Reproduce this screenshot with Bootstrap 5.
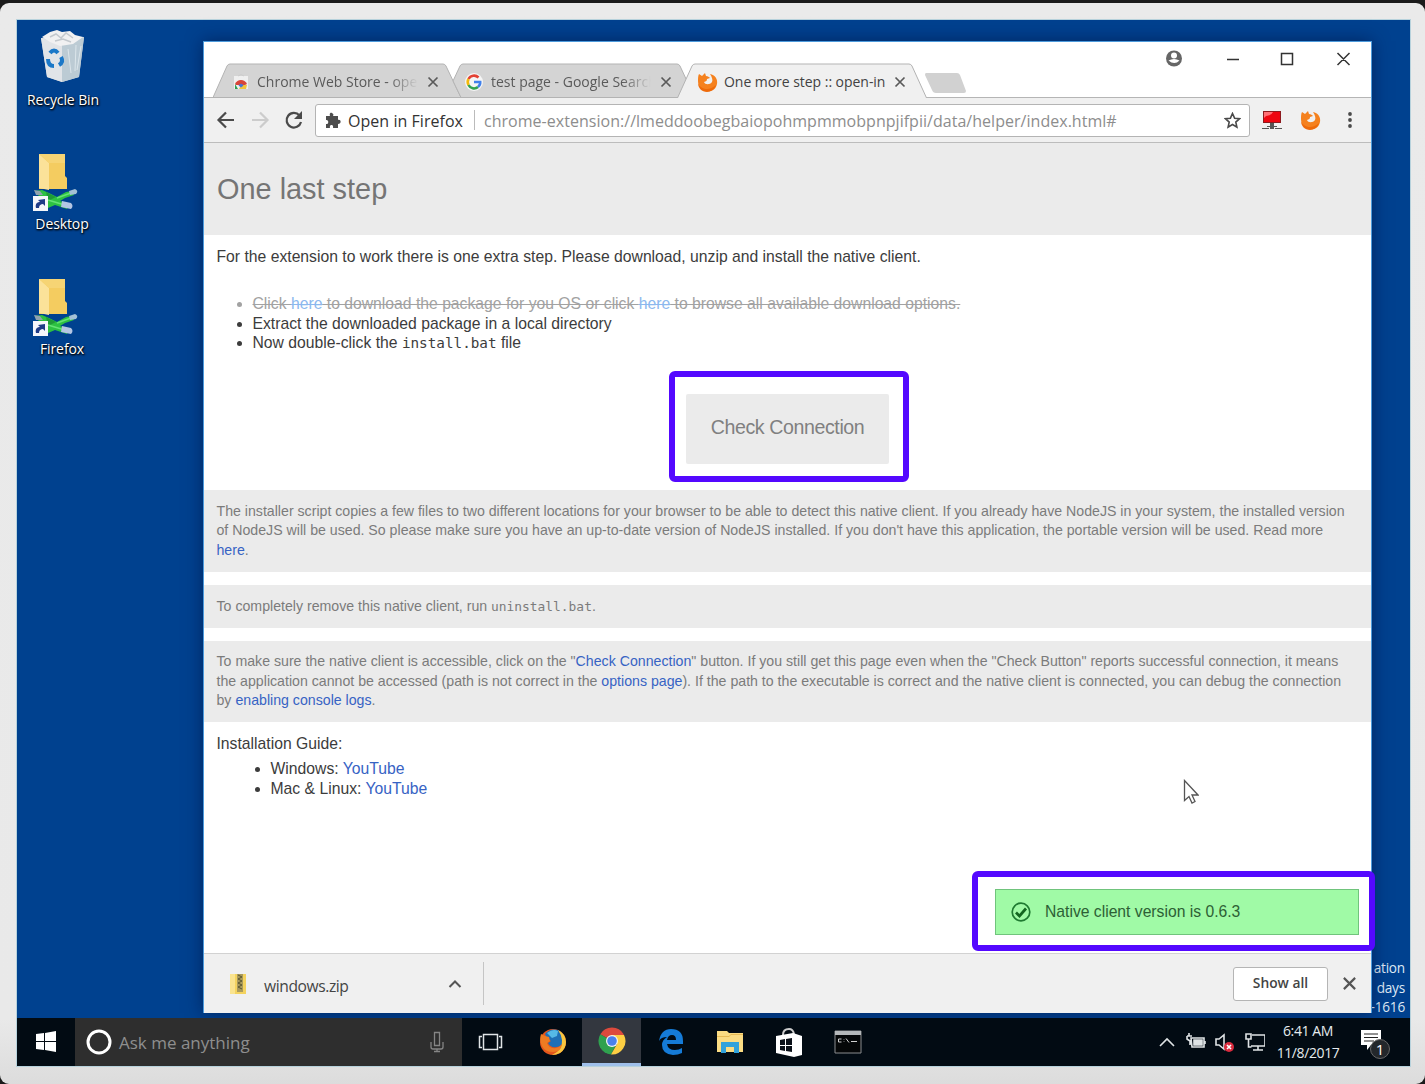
<!DOCTYPE html>
<html lang="en">
<head>
<meta charset="utf-8">
<title>One more step :: open-in</title>
<link href="https://cdn.jsdelivr.net/npm/bootstrap@5.3.0/dist/css/bootstrap.min.css" rel="stylesheet">
<style>
html,body{height:1084px;overflow:hidden}
body{background:#1b1b1b;padding-top:3px;font-family:"Liberation Sans",sans-serif;color:#3c3c3c}
.bezel{height:1081px;width:1425px;background:linear-gradient(#eaeaea,#e9e9e9 94%,#dcdcdc);border-radius:9px;padding:17px 15px 17px 17px}
.desk{width:1393px;height:1046px;background:#00418f;position:relative;outline:1px solid #b7d2dc}
.ui{font-family:"Open Sans","Noto Sans",sans-serif;white-space:nowrap}
svg{display:block;flex:none}
.shortcut{position:absolute;width:92px;text-align:center;color:#fff;font-size:14px;line-height:18px;letter-spacing:-.1px;text-shadow:1px 1px 2px #000,0 1px 2px #000}
.shortcut svg{margin:0 auto}
.wmark{position:absolute;right:5px;top:938px;color:#dfe9f6;font-size:13.6px;line-height:19.6px;text-align:right;letter-spacing:-.2px}
.win{position:absolute;left:186px;top:21px;width:1169px;height:972px;background:#fff;border:1px solid #4d9bdc;box-shadow:0 0 16px rgba(0,10,50,.5)}
.strip{height:56px;border-bottom:1px solid #b5b5b5;position:relative}
.tabs{position:absolute;left:9px;top:21px}
.tabrow{height:36px;padding:4px 0 0 26px;font-size:14px;color:#5a5a5a}
.tabtext{overflow:hidden;line-height:30px;height:30px}
.fade-end{-webkit-mask-image:linear-gradient(90deg,#000 82%,transparent);mask-image:linear-gradient(90deg,#000 82%,transparent)}
.tools{height:45px;background:#f0f0f0;border-bottom:1px solid #bcbcbc;padding-left:12px}
.omni{margin-left:11px;width:935px;height:33px;background:#fff;border:1px solid #b4b4b4;border-radius:3px;padding:0 8px 0 8px}
.omni .site{color:#333;font-size:16px;letter-spacing:.04px;margin-left:7px;width:115px;padding-top:2px}
.omni .url{color:#8d8d8d;font-size:16px;letter-spacing:.03px;border-left:1px solid #bbb;line-height:20px;margin-left:11px;padding-left:9px}
.omni .url span{position:relative;top:1px}
.pg{height:810px;background:#fff;position:relative}
.hero{height:92px;background:#ebebeb;padding-left:13px}
.hero h1{font-size:28.9px;color:#757575;font-weight:400;margin:0}
.body-txt{font-size:15.72px;line-height:19.5px;padding:0 12.5px;white-space:nowrap}
.body-txt ul{margin:0;padding-left:36px}
.note{background:#ebebeb;color:#7b7b7b;font-size:14.16px;line-height:19.5px;padding:11.5px 12.5px;white-space:nowrap}
.pg a{color:#3763c4;text-decoration:none}
.pg code{color:inherit;font-family:"DejaVu Sans Mono",monospace;font-size:.91em;line-height:1}
.gone{color:#a2a2a2;text-decoration:line-through}
.gone a{color:#8cb8ee!important;text-decoration:line-through}
.mark-box{border:6px solid #5408ff;border-radius:6px;background:#fff}
.mark-btn{margin:0 auto;width:240px;height:111px;padding:17px 3px 0 0}
.check{width:203px;height:70px;background:#ebebeb;border:0;border-radius:2px;color:#808080;font-size:19.6px;letter-spacing:-.4px;padding:0 0 2px}
.mark-toast{position:absolute;left:768px;top:728px;width:403px;height:80px;padding:12px 10px 0 17px}
.toast-ok{height:46px;background:#a0faa6;border:1px solid #70c47c;color:#2d6035;font-size:15.7px;padding-left:15px}
.shelf{height:60px;background:#f0f0f0;border-top:1px solid #d2d2d2}
.showall{width:95px;height:34px;background:#fff;border:1px solid #b5b5b5;border-radius:3px;color:#444;font-size:13.8px;font-weight:600}
.taskbar{position:absolute;left:0;bottom:0;width:1393px;height:48px;background:#020b13}
.search{width:387px;background:#2e2e2e;color:#8e8e8e;font-size:17px}
.app{width:59px;height:48px}
.app.on{background:#33373f;border-bottom:3px solid #9fbfea}
.clock{font-size:14px;line-height:22px;color:#e6ebee;text-align:center;letter-spacing:-.4px;width:70px}
.pointer{position:absolute;left:979px;top:636px}
</style>
</head>
<body>
<svg width="0" height="0" class="position-absolute">
<defs>
<symbol id="fox" viewBox="0 0 20 20"><path d="M1 2l3 2 3-3 1 3c2 0 3 1 4 2l-3 1c0 2-1 2-3 3 1 3 6 3 8 0 1-2 0-5-2-8 5 1 8 5 7 10-1 5-5 8-10 7C3 18 0 14 0 9c0-3 0-5 1-7z" fill="#f5811e"/><path d="M0 11c2 6 11 9 18 2-1 4-5 7-9 7-5 0-9-4-9-9z" fill="#ee6a0a"/></symbol>
<symbol id="x" viewBox="0 0 12 12"><path d="M1.500 1.500l9 9m0-9l-9 9" fill="none" stroke="currentColor" stroke-width="1.700"/></symbol>
<symbol id="netfolder" viewBox="0 0 46 58"><path d="M6 1h26v22l2 2v11H6z" fill="#f4cc60"/><path d="M6 1l10 9v27L6 35z" fill="#fbe299"/><path d="M16 10h16V1H6z" fill="#f6d474"/><path d="M2 38l7-1 7 3 8 4 9-5 6-1 2 4-9 3-5 3 9 3-2 5-12-4-7 3z" fill="#2dc142"/><path d="M13 39l10 5-8 4z" fill="#1f9a37"/><path d="M15 47l20 6M24 45l14-5" stroke="#65e374" stroke-width="1.500"/><path d="M36 38l6-2q4 2 1 5l-6 1z" fill="#a3c0d6"/><path d="M29 48l9 2q3 3 0 6l-10-2z" fill="#b4c6e4"/><path d="M1 37l6 1 3 4H3z" fill="#8fa3ad"/><path d="M0 43h15v15H0z" fill="#f4f6fa"/><path d="M3 55c-1-4 1-6 4-6l-2-2 7-1v7l-2-2c-2 0-4 1-4 4z" fill="#1e3b87"/></symbol>
</defs></svg>

<div class="bezel"><div class="desk">
  <div class="shortcut ui" style="left:0;top:9px">
    <svg width="50" height="54" viewBox="0 0 50 54"><path d="M3 9l43-1-5 40-17 5-15-5z" fill="#d5dbe0"/><path d="M24 16l22-8-5 40-17 5z" fill="#bccbd4"/><path d="M3 9l21 7v37L9 48z" fill="#e1e4e8"/><path d="M4 8l8-5 7-2 5 2 8-1 5 4 8 2-10 7-13 2-10-4z" fill="#f1f1f2"/><path d="M12 8l6-3 5 4 5-5 7 5M17 12l8-2 8 3" fill="none" stroke="#c3c8cd" stroke-width="1.500"/><path d="M30 20l3 24m5-28l-1 26m6-25l-4 24" stroke="#dce6eb"/><g fill="none" stroke="#1b78c8" stroke-width="4"><path d="M12 24q4-5 8 0"/><path d="M23 28q3 5-2 8"/><path d="M16 37q-6 0-6-7"/></g></svg>
    <div style="margin-top:8px">Recycle Bin</div>
  </div>
  <div class="shortcut ui" style="left:-1px;top:133px"><svg width="46" height="58" style="margin-left:17px"><use href="#netfolder"/></svg><div style="margin-top:4px">Desktop</div></div>
  <div class="shortcut ui" style="left:-1px;top:258px"><svg width="46" height="58" style="margin-left:17px"><use href="#netfolder"/></svg><div style="margin-top:4px">Firefox</div></div>
  <div class="wmark ui">ation<br>days<br>-1616</div>

  <main class="win">
    <div class="strip">
      <svg class="tabs" width="760" height="35" viewBox="0 0 760 35"><path d="M0 34.500L14 3q1-2 3-2H230q2 0 3 2L248 34.500z" fill="#d4d4d4" stroke="#b3b3b3"/><path d="M248 34.500L240 18 247 3q1-2 3-2H464q2 0 3 2L474 18 466 34.500z" fill="#d4d4d4" stroke="#b3b3b3"/><path d="M464 36L479 3q1-2 3-2H696q2 0 3 2L714 36z" fill="#f0f0f0" stroke="#b3b3b3"/><path d="M713 10h31q2 0 3 2l6 16q0 2-2 2h-28q-3 0-4-3l-7-15q0-2 1-2z" fill="#d1d1d1"/></svg>
      <div class="position-absolute d-flex align-items-center ui tabrow" style="left:2px;top:20px">
        <svg width="18" height="18" viewBox="0 0 18 18"><path d="M2 3h14v13H2z" fill="#efefef"/><path d="M6 3q3-3 6 0" fill="none" stroke="#ccc"/><path d="M3 11q2-4 6-4t6 4l-2 1H4z" fill="#d8463a"/><path d="M3 11l3 5H3z" fill="#2e9e54"/><path d="M9 12h6l-1 4H7z" fill="#f2c43c"/><path d="M6.500 12.500q2.500-3.500 5 0l-2.500 2z" fill="#4477d8"/></svg>
        <div class="tabtext fade-end" style="margin-left:7px;width:161px">Chrome Web Store - open</div>
        <svg width="12" height="12" style="margin-left:9px"><use href="#x"/></svg>
        <svg width="18" height="18" viewBox="0 0 18 18" style="margin-left:26px"><circle cx="9" cy="9" r="9" fill="#f5f5f5"/><g fill="none" stroke-width="2.600"><path d="M13.500 4.500A6.200 6.200 0 003.500 6" stroke="#e34133"/><path d="M3.500 6a6.200 6.200 0 000 6" stroke="#f3b90c"/><path d="M3.500 12a6.200 6.200 0 009.500 2" stroke="#32a350"/><path d="M13 14q2.500-2 2.200-5H9" stroke="#4081ec"/></g></svg>
        <div class="tabtext fade-end" style="margin-left:8px;width:160px">test page - Google Search</div>
        <svg width="12" height="12" style="margin-left:9px"><use href="#x"/></svg>
        <svg width="20" height="20" style="margin-left:26px"><use href="#fox"/></svg>
        <div class="tabtext" style="margin-left:6px;width:162px;color:#424242;letter-spacing:-.04px">One more step :: open-in</div>
        <svg width="12" height="12" style="margin-left:8px"><use href="#x"/></svg>
      </div>
      <svg class="position-absolute" style="left:962px;top:6px" width="190" height="20" viewBox="0 0 190 20"><circle cx="8" cy="10.500" r="8" fill="#666"/><circle cx="8" cy="7.500" r="3" fill="#fff"/><path d="M2.500 12.500q5.500-3 11 0-5 5-11 0z" fill="#fff"/><path d="M61 11.500h12M115.500 5.500h11v11h-11zM171.500 5l12 12m0-12l-12 12" fill="none" stroke="#333" stroke-width="1.500"/></svg>
    </div>
    <div class="tools d-flex align-items-center ui">
      <svg width="88" height="22" viewBox="0 0 88 22"><g fill="none" stroke-width="2.200"><path d="M18 11H3M10 3.500L2.500 11 10 18.500" stroke="#4a4a4a"/><path d="M36 11h15M44 3.500l7.500 7.500-7.500 7.500" stroke="#ccc"/><path d="M83.500 6.500A7.300 7.300 0 1085 13" stroke="#4a4a4a"/></g><path d="M86 2v8h-8z" fill="#4a4a4a"/></svg>
      <div class="omni d-flex align-items-center">
        <svg width="17" height="17" viewBox="0 0 17 17"><path d="M2 4h4C5 1 7 0 8 1s2 1 1 3h5v4c3-1 4 4 0 4v4H9c1-4-4-4-3 0H2v-4c3 1 3-5 0-4z" fill="#4c4c4c"/></svg>
        <span class="site">Open in Firefox</span><span class="url"><span>chrome-extension://lmeddoobegbaiopohmpmmobpnpjifpii/data/helper/index.html#</span></span>
        <svg class="ms-auto" width="17" height="17" viewBox="0 0 17 17"><path d="M8.500 1.500l2.100 4.700 5 .5-3.800 3.400 1.100 5-4.400-2.600-4.400 2.600 1.100-5L1.400 6.700l5-.5z" fill="none" stroke="#4a4a4a" stroke-width="1.600"/></svg>
      </div>
      <svg width="20" height="20" viewBox="0 0 20 20" style="margin-left:12px"><path d="M1 1h18v12H1z" fill="#8d1a1e"/><path d="M2 2h16v10H2z" fill="#ee0610"/><path d="M2 2h9q-2 4-7 4l-2 2z" fill="#ff7075"/><path d="M8 13h4v3h3v1H5v-1h3zM0 18h7v1H0zm13 0h7v1h-7zM8 17h4v2H8z" fill="#555"/></svg>
      <svg width="20" height="20" style="margin-left:19px"><use href="#fox"/></svg>
      <svg width="4" height="18" viewBox="0 0 4 18" style="margin-left:27px" fill="#4a4a4a"><circle cx="2" cy="3" r="1.900"/><circle cx="2" cy="9" r="1.900"/><circle cx="2" cy="15" r="1.900"/></svg>
    </div>

    <div class="pg">
      <div class="hero d-flex align-items-center"><h1>One last step</h1></div>
      <div class="body-txt" style="padding-top:12px">
        <div style="margin-bottom:27.500px">For the extension to work there is one extra step. Please download, unzip and install the native client.</div>
        <ul>
          <li class="gone">Click <a href="#">here</a> to download the package for you OS or click <a href="#">here</a> to browse all available download options.</li>
          <li>Extract the downloaded package in a local directory</li>
          <li>Now double-click the <code>install.bat</code> file</li>
        </ul>
      </div>
      <div class="mark-box mark-btn" style="margin-top:18.500px;position:relative;left:1.500px"><button class="check d-block mx-auto">Check Connection</button></div>
      <div class="note" style="margin-top:8px">The installer script copies a few files to two different locations for your browser to be able to detect this native client. If you already have NodeJS in your system, the installed version<br>of NodeJS will be used. So please make sure you have an up-to-date version of NodeJS installed. If you don't have this application, the portable version will be used. Read more<br><a href="#">here</a>.</div>
      <div class="note" style="margin-top:13.500px">To completely remove this native client, run <code>uninstall.bat</code>.</div>
      <div class="note" style="margin-top:13px">To make sure the native client is accessible, click on the "<a href="#">Check Connection</a>" button. If you still get this page even when the "Check Button" reports successful connection, it means<br>the application cannot be accessed (path is not correct in the <a href="#">options page</a>). If the path to the executable is correct and the native client is connected, you can debug the connection<br>by <a href="#">enabling console logs</a>.</div>
      <div class="body-txt" style="padding-top:11.500px">
        <div style="margin-bottom:6px">Installation Guide:</div>
        <ul style="padding-left:54px"><li>Windows: <a href="#">YouTube</a></li><li>Mac &amp; Linux: <a href="#">YouTube</a></li></ul>
      </div>
      <svg class="pointer" width="16" height="26" viewBox="0 0 16 26"><path d="M1.500 1.500v20l4.500-4 3 6.500 3-1.500-3-6.500h6z" fill="#fff" stroke="#555" stroke-width="1.300"/></svg>
      <div class="mark-box mark-toast"><div class="toast-ok d-flex align-items-center">
        <svg width="20" height="20" viewBox="0 0 20 20"><circle cx="10" cy="10" r="8.800" fill="none" stroke="#1f7a31" stroke-width="1.700"/><path d="M5 10.500l3.500 3.500L15 6.500" fill="none" stroke="#12651f" stroke-width="2.700"/></svg>
        <span style="margin-left:14px">Native client version is 0.6.3</span></div></div>
    </div>

    <div class="shelf d-flex align-items-center ui">
      <svg width="18" height="22" viewBox="0 0 18 22" style="margin-left:25px"><path d="M1 1h16v20H1z" fill="#f4d35f"/><path d="M1 1h5v20H1z" fill="#fae48f"/><path d="M8 1h6v18H8z" fill="#a99a5d"/><path d="M9 2l4 2-4 2 4 2-4 2 4 2-4 2 4 2" fill="none" stroke="#59562f"/></svg>
      <span style="margin-left:17px;font-size:15.600px;letter-spacing:-.4px;color:#444;width:85px;padding-top:6px">windows.zip</span>
      <svg width="14" height="10" viewBox="0 0 14 10" style="margin-left:99px"><path d="M1.500 8L7 2.500 12.500 8" fill="none" stroke="#555" stroke-width="2"/></svg>
      <div style="margin-left:21px;width:1px;height:43px;background:#c5c5c5"></div>
      <button class="showall p-0 ms-auto">Show all</button>
      <svg width="15" height="15" style="margin:0 14px 0 14px;color:#555"><use href="#x"/></svg>
    </div>
  </main>

  <div class="taskbar d-flex align-items-center ui">
    <svg width="58" height="48" viewBox="0 0 58 48" fill="#fff"><path d="M19 16l8-1v8h-8zM28 15l11-2v10H28zM19 24h8v8l-8-1zM28 24h11v10l-11-2z"/></svg>
    <div class="search h-100 d-flex align-items-center"><svg width="26" height="26" viewBox="0 0 26 26" style="margin-left:11px"><circle cx="13" cy="13" r="11" fill="none" stroke="#fff" stroke-width="3"/></svg><span style="margin-left:7px;padding-top:2px">Ask me anything</span>
      <svg class="ms-auto" width="14" height="22" viewBox="0 0 14 22" style="margin-right:18px"><path d="M4.500 1.500h5v13h-5zM1 11v5q0 2 2 2h8q2 0 2-2v-5M7 18v3M4 20.500h6" fill="none" stroke="#858585" stroke-width="1.300"/></svg></div>
    <svg width="26" height="18" viewBox="0 0 26 18" style="margin-left:16px"><path d="M5.500 1.500h14v15h-14zM4 3.500H1.500v11H4M21 3.500h2.500v11H21" fill="none" stroke="#e0e4e6" stroke-width="1.500"/></svg>
    <div class="app d-flex align-items-center justify-content-center" style="margin-left:19px"><svg width="28" height="28" viewBox="0 0 28 28"><circle cx="14" cy="14" r="13" fill="#e4561c"/><path d="M6 6q5-6 13-4 6 3 6 9-1 7-7 8-7 1-9-4l3-2-4-3z" fill="#1f6fb5"/><path d="M8 5q6-5 11-2l-1 5-5 2z" fill="#56b9e6"/><path d="M19 2q8 4 8 12 0 7-6 11-4 2-8 2 11-5 10-15-1-6-4-10z" fill="#f8c63f"/><path d="M2 6l4 2 4 1 1 4-3 2q2 6 9 5 4-1 6-4-1 8-9 8-8 0-11-6-3-6-1-12z" fill="#ee7b22"/></svg></div>
    <div class="app on d-flex align-items-center justify-content-center"><svg width="28" height="28" viewBox="0 0 28 28"><path d="M14 14L2.300 7.200A13.500 13.500 0 0125.700 7.200V8H14z" fill="#dd4a3d"/><path d="M14 14L2.300 7.200A13.500 13.500 0 0013 27.500L18 18z" fill="#2fa14f"/><path d="M14 8h12a13.500 13.500 0 01-13 19.500L19 17z" fill="#fcce43"/><circle cx="14" cy="14" r="6" fill="#f5f5f5"/><circle cx="14" cy="14" r="4.800" fill="#4a80ec"/></svg></div>
    <div class="app d-flex align-items-center justify-content-center"><svg width="26" height="28" viewBox="0 0 26 28"><path d="M1 13Q3 1 13 1q12 0 12 12v3H9q1 6 8 6 4 0 7-2v5q-4 2-9 2Q4 26 4 17q0-5 5-8-6 0-8 4zm8-1h9q0-5-4-5-4 0-5 5z" fill="#157bd7" fill-rule="evenodd"/></svg></div>
    <div class="app d-flex align-items-center justify-content-center"><svg width="28" height="24" viewBox="0 0 28 24"><path d="M1 1h10l2 2h14v19H1z" fill="#fbdc83"/><path d="M1 6h12l2-2h12v1H15l-2 2H1z" fill="#e8bb55"/><path d="M5 23V12h18v11h-5v-6h-8v6z" fill="#31a2dc"/></svg></div>
    <div class="app d-flex align-items-center justify-content-center"><svg width="28" height="30" viewBox="0 0 28 30"><path d="M8 8q0-6 6-6 4 0 5 5" fill="none" stroke="#ccc" stroke-width="2"/><path d="M1 9l17-3 9 3v19l-8 2-18-4z" fill="#fff"/><path d="M5 13l5-1v6H5zM11 12l6-1v7h-6zM5 19h5v5l-5-1zM11 19h6v6l-6-1z" fill="#0a1018"/></svg></div>
    <div class="app d-flex align-items-center justify-content-center"><svg width="28" height="24" viewBox="0 0 28 24"><path d="M1 1h26v22H1z" fill="#050708" stroke="#8a8d8f"/><path d="M1 1h26v4H1z" fill="#b5b8ba"/><path d="M7.500 9H4.500v3h3M10 9v.5m0 2v.5M12 8.500l3 4M17 11.500h6" stroke="#d0d0d0" fill="none"/></svg></div>
    <svg class="ms-auto" width="108" height="24" viewBox="0 0 108 24" fill="none" stroke="#dfe3e5" stroke-width="1.600"><path d="M3 16l7-7 7 7"/><path d="M34 8h13v9H35zM48 11v3M30 6h5M30 6v3l3 2v4M32 3v3"/><path d="M37 10h8v5h-8z" fill="#dfe3e5"/><path d="M59 9h3l5-4v14l-5-4h-3z"/><circle cx="72" cy="17" r="5" fill="#d92a3d" stroke="none"/><path d="M70 15l4 4m0-4l-4 4" stroke="#fff"/><path d="M95 5h13v11H94M101 16v4M96 20h10M89 4h5v5h-5zM91.500 9v8h3"/></svg>
    <div class="clock" style="margin-left:8px">6:41 AM<br>11/8/2017</div>
    <svg width="32" height="32" viewBox="0 0 32 32" style="margin:6px 18px 0 17px"><path d="M1 1h20v15H11l-4 5v-5H1z" fill="#fff"/><path d="M4 5h14M4 8.500h14M4 12h10" stroke="#222"/><circle cx="20" cy="20" r="9.500" fill="#23272b" stroke="#666"/><text x="20" y="25.500" font-size="15" fill="#fff" text-anchor="middle">1</text></svg>
  </div>
</div></div>
<script src="https://cdn.jsdelivr.net/npm/bootstrap@5.3.0/dist/js/bootstrap.bundle.min.js"></script>
</body>
</html>
